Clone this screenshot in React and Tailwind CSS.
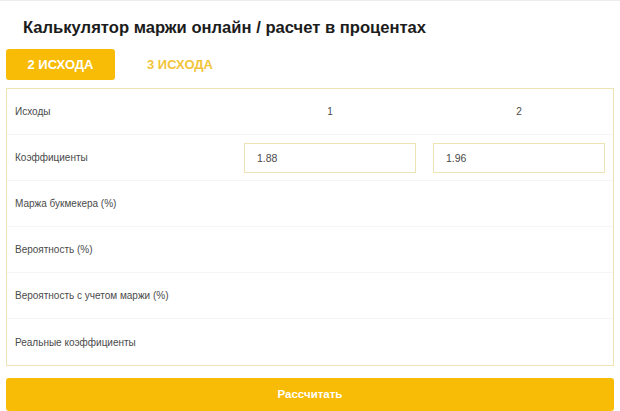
import React from "react";

const rows = [
  "Маржа букмекера (%)",
  "Вероятность (%)",
  "Вероятность с учетом маржи (%)",
  "Реальные коэффициенты",
];

function App() {
  return (
    <div
      className="w-[620px] h-[411px] bg-white border-t border-[#ececec] overflow-hidden"
      style={{ fontFamily: '"Liberation Sans", Arial, sans-serif' }}
    >
      <h1 className="pl-[23px] pt-[16px] h-[48px] text-[16.6px] font-bold text-[#1c1c1c] leading-[22px]">
        Калькулятор маржи онлайн / расчет в процентах
      </h1>

      <div className="flex px-[6px] h-[31px]">
        <button className="w-[109px] h-[31px] rounded-[3px] bg-[#f8bb06] text-white text-[13px] font-bold">
          2 ИСХОДА
        </button>
        <button className="w-[130px] h-[31px] text-[#f2c43a] text-[13px] font-bold">
          3 ИСХОДА
        </button>
      </div>

      <div className="mx-[6px] mt-[8px] border border-[#eee3b4] text-[10px] text-[#4a4a4a]">
        <div className="flex items-center h-[46px] border-b border-[#f5f5f5]">
          <div className="w-[237px] pl-[8px]">Исходы</div>
          <div className="w-[172px] text-center">1</div>
          <div className="w-[172px] ml-[17px] text-center">2</div>
        </div>
        <div className="flex items-center h-[46px] border-b border-[#f5f5f5]">
          <div className="w-[237px] pl-[8px]">Коэффициенты</div>
          <input
            className="w-[172px] h-[30px] border border-[#eee3b4] px-[12px] text-[10.5px] text-[#4a4a4a] outline-none"
            defaultValue="1.88"
          />
          <input
            className="w-[172px] h-[30px] ml-[17px] border border-[#eee3b4] px-[12px] text-[10.5px] text-[#4a4a4a] outline-none"
            defaultValue="1.96"
          />
        </div>
        {rows.map((label, i) => (
          <div
            key={label}
            className={
              "flex items-center h-[46px] pl-[8px] " +
              (i < rows.length - 1 ? "border-b border-[#f5f5f5]" : "")
            }
          >
            {label}
          </div>
        ))}
      </div>

      <button className="mx-[6px] mt-[12px] w-[608px] h-[33px] rounded-[3px] bg-[#f8bb06] text-white text-[11.5px] font-bold">
        Рассчитать
      </button>
    </div>
  );
}

export default App;
